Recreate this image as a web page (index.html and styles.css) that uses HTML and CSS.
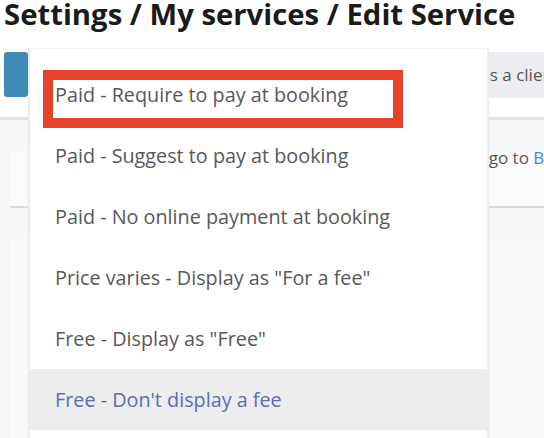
FILE: index.html
```html
<!DOCTYPE html>
<html>
<head>
<meta charset="utf-8">
<link rel="stylesheet" href="styles.css">
</head>
<body>
<div class="page">
  <h1 class="title">Settings / My services / Edit Service</h1>
  <div class="toolbar">
    <div class="btn"></div>
    <div class="toggle">Show this service as a client</div>
  </div>
  <div class="content">
    <div class="card card-top">
      <span class="hint">To set the price, go to <a class="link">Billing</a></span>
    </div>
    <div class="card card-bottom"></div>
  </div>

  <div class="dropdown">
    <ul class="options">
      <li class="option">Paid - Require to pay at booking</li>
      <li class="option">Paid - Suggest to pay at booking</li>
      <li class="option">Paid - No online payment at booking</li>
      <li class="option">Price varies - Display as "For a fee"</li>
      <li class="option">Free - Display as "Free"</li>
      <li class="option selected">Free - Don't display a fee</li>
    </ul>
    <div class="highlight-box"></div>
  </div>
</div>
</body>
</html>
```
FILE: styles.css
```css
html, body {
  margin: 0;
  padding: 0;
  background: #ffffff;
  overflow: hidden;
}
body {
  font-family: "Open Sans", "Noto Sans", sans-serif;
  width: 544px;
  height: 438px;
}
.page {
  position: relative;
  height: 438px;
  overflow: hidden;
}
.title {
  margin: 0;
  padding: 0 0 0 4px;
  height: 52px;
  font-size: 29.3px;
  line-height: 28px;
  font-weight: 700;
  color: #1b1b1b;
  white-space: nowrap;
}
.toolbar {
  display: flex;
  height: 46px;
}
.btn {
  width: 24px;
  margin-left: 4px;
  height: 45px;
  background: #3f8bb6;
  border-radius: 3px;
}
.toggle {
  flex: 1;
  margin-left: 14px;
  background: #ededf1;
  color: #555;
  font-size: 17px;
  line-height: 46px;
  white-space: nowrap;
  overflow: hidden;
  padding-left: 298px;
}
.content {
  margin-top: 19px;
  border-top: 3px solid #e2e2e4;
  background: #f6f7f9;
  padding: 31px 0 0 10px;
  height: 300px;
}
.card {
  background: #fbfbfc;
}
.card-top {
  height: 55px;
  border-bottom: 2px solid #dcdcde;
  position: relative;
  white-space: nowrap;
  overflow: hidden;
}
.hint {
  display: block;
  font-size: 17px;
  color: #555;
  line-height: 14px;
  padding: 0 0 0 348px;
}
.link {
  color: #4a80e0;
}
.card-bottom {
  margin-top: 31px;
  height: 200px;
  background: #fafafb;
}
.dropdown {
  position: absolute;
  left: 28px;
  top: 48px;
  width: 457px;
  height: 400px;
  background: #ffffff;
  border-left: 2px solid #ececee;
  border-right: 2px solid #ececee;
  border-top: 1px solid #f4f4f6;
  box-shadow: 0 0 2px rgba(0,0,0,0.04);
}
.options {
  list-style: none;
  margin: 0;
  padding: 15px 0 0 0;
}
.option {
  height: 61px;
  line-height: 61px;
  padding-left: 25px;
  font-size: 19.8px;
  color: #585858;
  white-space: nowrap;
}
.option.selected {
  background: #ededed;
  color: #5c6bb8;
}
.highlight-box {
  position: absolute;
  left: 13px;
  top: 21px;
  width: 340px;
  height: 38px;
  border: 10px solid #e8432a;
}
```
